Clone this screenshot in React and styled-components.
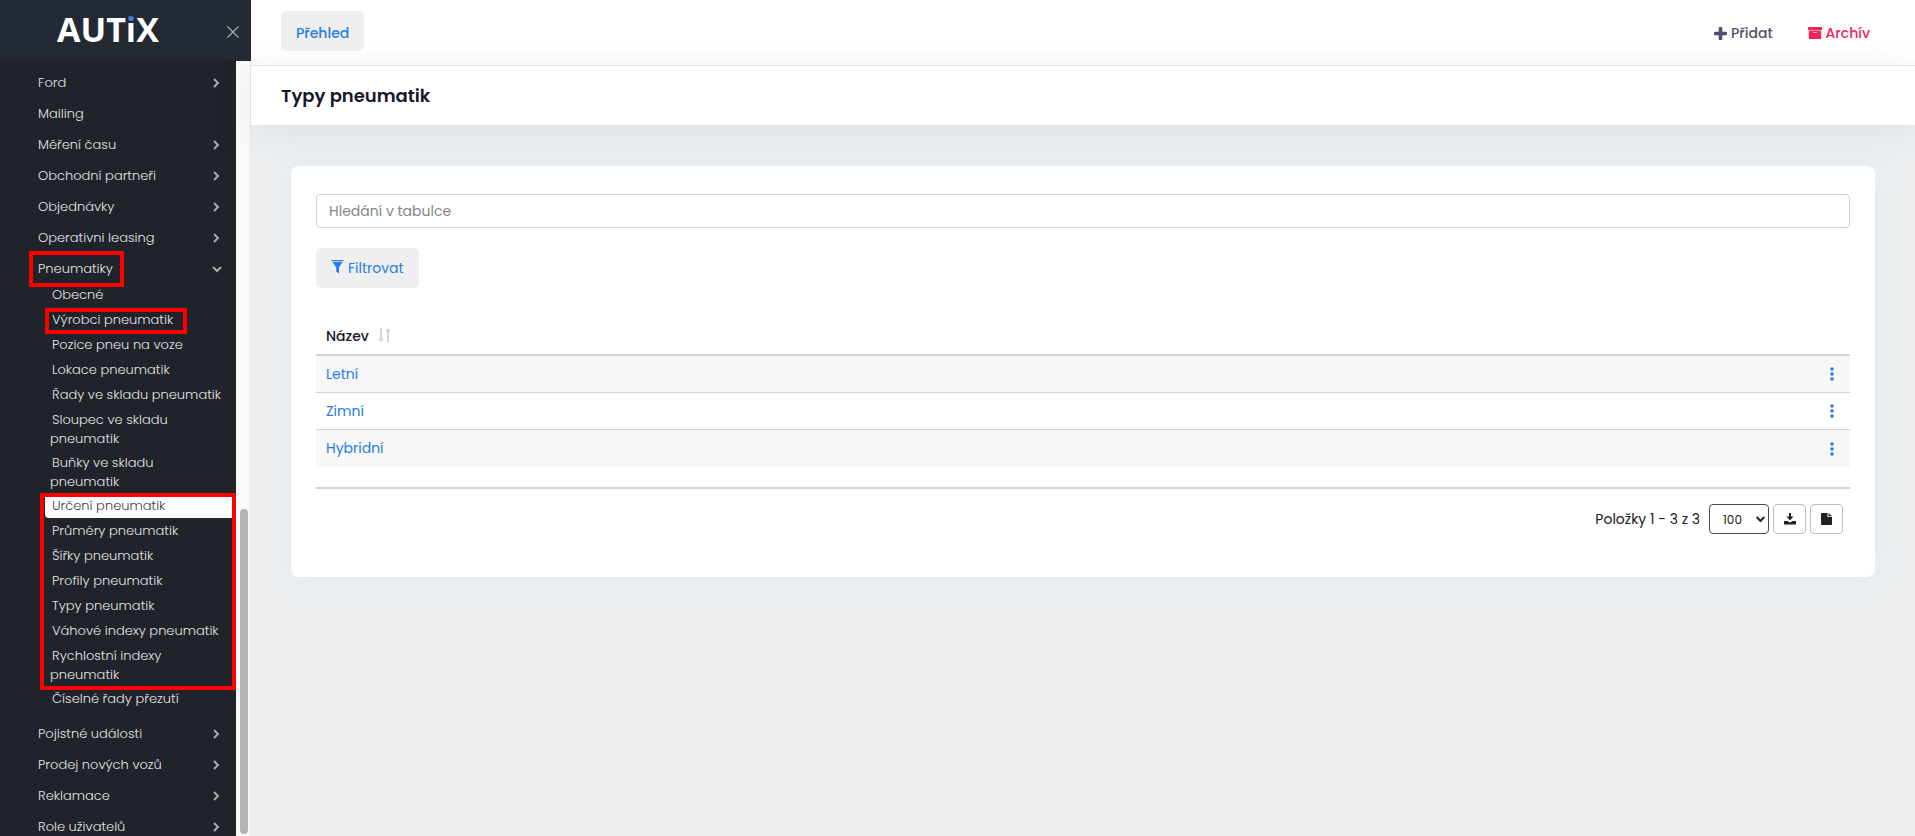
import React, { useState } from 'react'
import styled, { createGlobalStyle, css } from 'styled-components'

const GlobalStyle = createGlobalStyle`
  * {
    box-sizing: border-box;
  }
  body {
    margin: 0;
    background: #edeff1;
    color: #212121;
    font-family: Poppins, Inter, sans-serif;
    font-size: 14px;
  }
  button,
  input,
  select {
    font-family: inherit;
  }
  a {
    text-decoration: none;
  }
`

const Layout = styled.div`
  display: flex;
  height: 100vh;
  overflow: hidden;
`

const Sidebar = styled.aside`
  display: flex;
  flex-direction: column;
  flex: 0 0 251px;
  background: #202329;
`

const Brand = styled.div`
  display: flex;
  align-items: center;
  justify-content: space-between;
  flex: 0 0 61px;
  padding: 0 12px 0 57px;
  background: #242a33;
`

const Logo = styled.a`
  padding-bottom: 4px;
  color: #fff;
  font-family: 'Open Sans', sans-serif;
  font-weight: 700;
  font-size: 34px;
  line-height: 48px;
`

const LogoAccent = styled.span`
  background: linear-gradient(#3b7de0 17px, #fff 17px);
  background-clip: text;
  color: transparent;
`

const CloseButton = styled.button`
  display: flex;
  margin-top: 3px;
  padding: 0;
  border: 0;
  background: none;
  color: #a4a7ab;
  cursor: pointer;
`

const SidebarBody = styled.div`
  display: flex;
  flex: 1;
  min-height: 0;
`

const Nav = styled.nav`
  flex: 1;
  padding-top: 6px;
  overflow: hidden;
`

const ScrollTrack = styled.div`
  display: flex;
  flex-direction: column;
  justify-content: flex-end;
  flex: 0 0 15px;
  padding: 0 2px 2px 4px;
  border-right: 1px solid #e6e6e8;
  background: #fafafa;
`

const ScrollThumb = styled.div`
  height: 42%;
  border-radius: 4px;
  background: #b3b3b3;
`

const NavList = styled.ul`
  margin: 0;
  padding: 0;
  list-style: none;
`

const navText = css`
  color: #e3e4e6;
  font-weight: 300;
  font-size: 13px;
  white-space: nowrap;
`

const NavLink = styled.a`
  ${navText}
  position: relative;
  display: flex;
  align-items: center;
  justify-content: space-between;
  height: 31px;
  padding: 0 14px 0 38px;
`

const SubList = styled(NavList)`
  margin: -2px 0 7px 45px;
`

const SubItem = styled.li`
  position: relative;
`

const SubLink = styled.a`
  ${navText}
  display: block;
  min-height: 25px;
  padding: 3px 0 2px 5px;
  border-radius: 4px 0 0 4px;
  background: ${(props) => (props.$active ? '#fff' : 'none')};
  color: ${(props) => (props.$active ? '#3b3d44' : '#e3e4e6')};
  line-height: 19px;
  text-indent: 2px;
`

const Mark = styled.span`
  position: absolute;
  inset: ${(props) => props.$inset};
  border: 4px solid #fe0000;
  pointer-events: none;
`

const Main = styled.main`
  flex: 1;
  min-width: 0;
`

const Toolbar = styled.div`
  display: flex;
  align-items: flex-start;
  justify-content: space-between;
  height: 66px;
  padding: 11px 45px 0 30px;
  border-bottom: 1px solid #e6e7ea;
  background: linear-gradient(#fff 50px, #fcfcfc);
`

const SoftButton = styled.button`
  display: inline-flex;
  align-items: center;
  gap: 4px;
  height: 40px;
  padding: 0 15px;
  border: 0;
  border-radius: 5px;
  background: #efefef;
  color: #257de6;
  font-weight: 400;
  font-size: 14px;
  cursor: pointer;
`

const TabButton = styled(SoftButton)`
  padding-top: 4px;
  font-weight: 500;
`

const Actions = styled.div`
  display: flex;
  gap: 35px;
`

const ActionLink = styled.a`
  display: flex;
  align-items: center;
  gap: 4px;
  height: 44px;
  color: ${(props) => props.$color};
  font-weight: 500;
  font-size: 14px;
`

const PageHeader = styled.header`
  display: flex;
  align-items: center;
  height: 59px;
  padding: 0 30px;
  background: #fff;
  box-shadow: 0 8px 40px rgba(82, 96, 120, 0.1);
`

const PageTitle = styled.h1`
  margin: 0;
  color: #181828;
  font-weight: 600;
  font-size: 18px;
`

const Card = styled.section`
  margin: 41px 40px;
  padding: 28px 25px 43px;
  border-radius: 8px;
  background: #fff;
  box-shadow: 0 0 20px rgba(210, 230, 230, 0.4);
`

const SearchInput = styled.input`
  display: block;
  width: 100%;
  height: 34px;
  margin-bottom: 20px;
  padding: 0 12px;
  border: 1px solid #cfcfcf;
  border-radius: 4px;
  color: #212121;
  font-size: 14px;
  &::placeholder {
    color: #858585;
    opacity: 1;
  }
`

const Table = styled.table`
  width: 100%;
  margin-top: 28px;
  border-collapse: separate;
  border-spacing: 0;
`

const HeadCell = styled.th`
  height: 40px;
  padding: 2px 10px 0;
  border-bottom: 2px solid #d3d3d3;
  color: #181828;
  font-weight: 500;
  font-size: 14px;
  text-align: left;
`

const HeadLabel = styled.span`
  display: flex;
  align-items: center;
  gap: 9px;
`

const Cell = styled.td`
  height: 37px;
  padding: 0 10px;
  border-bottom: 1px solid #d3d3d3;
`

const Row = styled.tr`
  &:nth-child(odd) {
    background: #f7f7f7;
  }
  &:last-child ${Cell} {
    border-bottom: 0;
  }
`

const RowLink = styled.a`
  color: #257de6;
  font-size: 14px;
`

const MenuButton = styled.button`
  display: flex;
  margin-left: auto;
  padding: 0 6px;
  border: 0;
  background: none;
  color: #257de6;
  cursor: pointer;
`

const TableFooter = styled.footer`
  display: flex;
  align-items: center;
  justify-content: flex-end;
  gap: 4px;
  margin-top: 20px;
  padding: 15px 7px 0;
  border-top: 2px solid #d3d3d3;
`

const Summary = styled.label`
  margin-right: 5px;
  font-size: 14px;
`

const SelectWrap = styled.span`
  position: relative;
  display: flex;
`

const PageSize = styled.select`
  width: 60px;
  height: 30px;
  padding: 0 13px;
  appearance: none;
  border: 1px solid #4d4d4d;
  border-radius: 4px;
  background: #fff;
  color: #212121;
  font-size: 12px;
`

const SelectArrow = styled.svg`
  position: absolute;
  top: 12px;
  right: 4px;
  pointer-events: none;
`

const IconButton = styled.button`
  display: flex;
  align-items: center;
  justify-content: center;
  width: 33px;
  height: 30px;
  padding: 0;
  border: 1px solid #bdbdbd;
  border-radius: 4px;
  background: #fff;
  color: #212121;
  cursor: pointer;
`

function Chevron({ open }) {
  return (
    <svg width="12" height="10" viewBox="0 0 12 10" fill="none" stroke="#a9abae" strokeWidth="2">
      <path d={open ? 'M3 3l4 4 4-4' : 'M4 1l4 4-4 4'} />
    </svg>
  )
}

const menuTop = [
  { label: 'Ford', nested: true },
  { label: 'Mailing' },
  { label: 'Měření času', nested: true },
  { label: 'Obchodní partneři', nested: true },
  { label: 'Objednávky', nested: true },
  { label: 'Operativni leasing', nested: true },
]

const menuBottom = [
  { label: 'Pojistné události', nested: true },
  { label: 'Prodej nových vozů', nested: true },
  { label: 'Reklamace', nested: true },
  { label: 'Role uživatelů', nested: true },
]

const tyresGeneral = [
  ['Pozice pneu na voze'],
  ['Lokace pneumatik'],
  ['Řady ve skladu pneumatik'],
  ['Sloupec ve skladu', 'pneumatik'],
  ['Buňky ve skladu', 'pneumatik'],
]

const tyresLists = [
  ['Určení pneumatik'],
  ['Průměry pneumatik'],
  ['Šířky pneumatik'],
  ['Profily pneumatik'],
  ['Typy pneumatik'],
  ['Váhové indexy pneumatik'],
  ['Rychlostní indexy', 'pneumatik'],
]

const rows = ['Letní', 'Zimní', 'Hybridní']

function NavItem({ label, nested }) {
  return (
    <li>
      <NavLink href="#">
        {label}
        {nested && <Chevron />}
      </NavLink>
    </li>
  )
}

function SubNavLink({ lines, active }) {
  return (
    <SubLink href="#" $active={active}>
      {lines[0]}
      {lines[1] && (
        <>
          <br />
          {lines[1]}
        </>
      )}
    </SubLink>
  )
}

function TyresMenu() {
  return (
    <li>
      <NavLink href="#">
        Pneumatiky
        <Chevron open />
        <Mark $inset="-2px 112px -3px 29px" />
      </NavLink>
      <SubList>
        <SubItem>
          <SubNavLink lines={['Obecné']} />
        </SubItem>
        <SubItem>
          <SubNavLink lines={['Výrobci pneumatik']} />
          <Mark $inset="1px 49px -2px 0" />
        </SubItem>
        {tyresGeneral.map((lines) => (
          <SubItem key={lines[0]}>
            <SubNavLink lines={lines} />
          </SubItem>
        ))}
        <SubItem>
          <NavList>
            {tyresLists.map((lines, i) => (
              <li key={lines[0]}>
                <SubNavLink lines={lines} active={i === 0} />
              </li>
            ))}
          </NavList>
          <Mark $inset="0 0 -4px -5px" />
        </SubItem>
        <SubItem>
          <SubNavLink lines={['Číselné řady přezutí']} />
        </SubItem>
      </SubList>
    </li>
  )
}

function App() {
  const [search, setSearch] = useState('')
  return (
    <>
      <GlobalStyle />
      <Layout>
        <Sidebar>
          <Brand>
            <Logo href="#">
              AUT<LogoAccent>i</LogoAccent>X
            </Logo>
            <CloseButton type="button" aria-label="Zavřít">
              <svg width="12" height="12" viewBox="0 0 12 12" stroke="currentColor" strokeWidth="1.3">
                <path d="M.5.5l11 11M11.5.5l-11 11" />
              </svg>
            </CloseButton>
          </Brand>
          <SidebarBody>
            <Nav>
              <NavList>
                {menuTop.map((item) => (
                  <NavItem key={item.label} {...item} />
                ))}
                <TyresMenu />
                {menuBottom.map((item) => (
                  <NavItem key={item.label} {...item} />
                ))}
              </NavList>
            </Nav>
            <ScrollTrack>
              <ScrollThumb />
            </ScrollTrack>
          </SidebarBody>
        </Sidebar>
        <Main>
          <Toolbar>
            <TabButton type="button">Přehled</TabButton>
            <Actions>
              <ActionLink href="#" $color="#50506a">
                <svg width="13" height="13" viewBox="0 0 13 13" fill="currentColor">
                  <path d="M5.500 0h2a.8.8 0 0 1 .8.8v3.900h3.900a.8.8 0 0 1 .8.8v2a.8.8 0 0 1-.8.8H8.300v3.900a.8.8 0 0 1-.8.8h-2a.8.8 0 0 1-.8-.8V8.300H.8a.8.8 0 0 1-.8-.8v-2a.8.8 0 0 1 .8-.8h3.900V.8a.8.8 0 0 1 .8-.8z" />
                </svg>
                Přidat
              </ActionLink>
              <ActionLink href="#" $color="#ee2558">
                <svg width="14" height="12" viewBox="0 0 14 12" fill="currentColor">
                  <path d="M.5 0h13a.5.5 0 0 1 .5.5V3H0V.5A.5.5 0 0 1 .5 0z" />
                  <path
                    fillRule="evenodd"
                    d="M.8 3.600h12.400v7.700a.7.7 0 0 1-.7.7h-11a.7.7 0 0 1-.7-.7zM5.300 5.200v.3c0 .3.200.5.500.5h2.400c.3 0 .5-.2.5-.5v-.3z"
                  />
                </svg>
                Archív
              </ActionLink>
            </Actions>
          </Toolbar>
          <PageHeader>
            <PageTitle>Typy pneumatik</PageTitle>
          </PageHeader>
          <Card>
            <SearchInput
              type="text"
              aria-label="Hledání v tabulce"
              placeholder="Hledání v tabulce"
              value={search}
              onChange={(e) => setSearch(e.target.value)}
            />
            <SoftButton type="button">
              <svg width="13" height="16" viewBox="0 0 13 16" fill="currentColor">
                <path d="M.5 0h12v1.200H.5zM1.500 2h10L8 7.500V13.500L5.200 11.500V7.500z" />
              </svg>
              Filtrovat
            </SoftButton>
            <Table>
              <thead>
                <tr>
                  <HeadCell scope="col">
                    <HeadLabel>
                      Název
                      <svg width="13" height="16" viewBox="0 0 13 16" fill="none" stroke="#d3d3d3" strokeWidth="2">
                        <path d="M3 0v12M10 14V2" />
                        <path d="M0 10.500h6L3 14zM7 3.500h6L10 0z" fill="#d3d3d3" stroke="none" />
                      </svg>
                    </HeadLabel>
                  </HeadCell>
                  <HeadCell as="td" />
                </tr>
              </thead>
              <tbody>
                {rows.map((name) => (
                  <Row key={name}>
                    <Cell>
                      <RowLink href="#">{name}</RowLink>
                    </Cell>
                    <Cell>
                      <MenuButton type="button" aria-label={`Akce ${name}`}>
                        <svg width="4" height="14" viewBox="0 0 4 14" fill="currentColor">
                          <circle cx="2" cy="2" r="1.800" />
                          <circle cx="2" cy="7" r="1.800" />
                          <circle cx="2" cy="12" r="1.800" />
                        </svg>
                      </MenuButton>
                    </Cell>
                  </Row>
                ))}
              </tbody>
            </Table>
            <TableFooter>
              <Summary htmlFor="page-size">Položky 1 - 3 z 3</Summary>
              <SelectWrap>
                <PageSize id="page-size" defaultValue="100">
                  <option>25</option>
                  <option>50</option>
                  <option>100</option>
                </PageSize>
                <SelectArrow width="9" height="7" viewBox="0 0 9 7" fill="none" stroke="#212121" strokeWidth="2">
                  <path d="M.7 1l3.800 4 3.800-4" />
                </SelectArrow>
              </SelectWrap>
              <IconButton type="button" aria-label="Stáhnout">
                <svg width="12" height="12" viewBox="0 0 12 12" fill="currentColor">
                  <path d="M5 0h2v3.500h2.500L6 7.500l-3.500-4H5z" />
                  <path d="M.5 8h2.800L6 9.500 8.700 8h2.800a.5.5 0 0 1 .5.5v2.500a.6.6 0 0 1-.6.6H.6A.6.6 0 0 1 0 11V8.500A.5.5 0 0 1 .5 8z" />
                </svg>
              </IconButton>
              <IconButton type="button" aria-label="Exportovat">
                <svg width="11" height="12" viewBox="0 0 11 12" fill="currentColor">
                  <path d="M.8 0H6.500v4H11v7.200a.8.8 0 0 1-.8.8H.8a.8.8 0 0 1-.8-.8V.8A.8.8 0 0 1 .8 0z" />
                  <path d="M7.500 0L11 3.200H7.500z" />
                </svg>
              </IconButton>
            </TableFooter>
          </Card>
        </Main>
      </Layout>
    </>
  )
}

export default App
